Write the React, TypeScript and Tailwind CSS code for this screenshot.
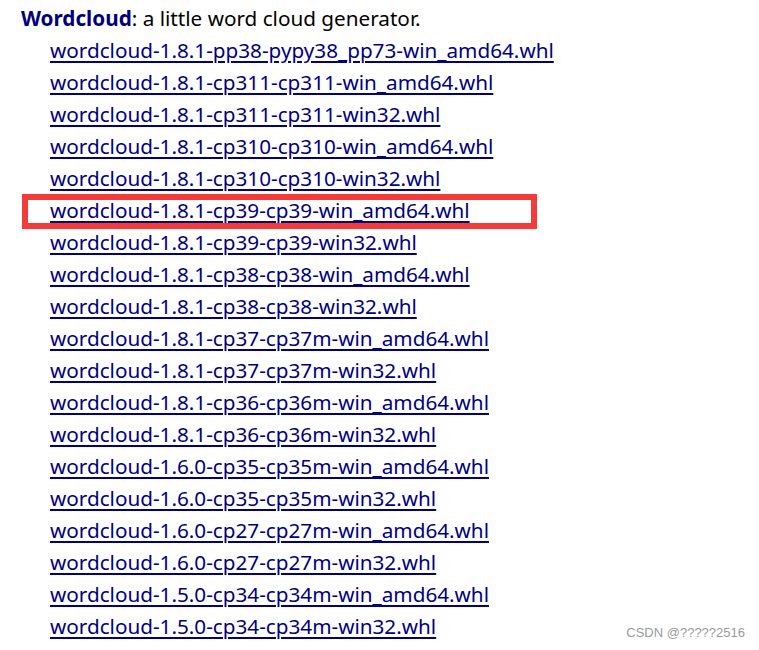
import React from 'react';

const files = [
  'wordcloud-1.8.1-pp38-pypy38_pp73-win_amd64.whl',
  'wordcloud-1.8.1-cp311-cp311-win_amd64.whl',
  'wordcloud-1.8.1-cp311-cp311-win32.whl',
  'wordcloud-1.8.1-cp310-cp310-win_amd64.whl',
  'wordcloud-1.8.1-cp310-cp310-win32.whl',
  'wordcloud-1.8.1-cp39-cp39-win_amd64.whl',
  'wordcloud-1.8.1-cp39-cp39-win32.whl',
  'wordcloud-1.8.1-cp38-cp38-win_amd64.whl',
  'wordcloud-1.8.1-cp38-cp38-win32.whl',
  'wordcloud-1.8.1-cp37-cp37m-win_amd64.whl',
  'wordcloud-1.8.1-cp37-cp37m-win32.whl',
  'wordcloud-1.8.1-cp36-cp36m-win_amd64.whl',
  'wordcloud-1.8.1-cp36-cp36m-win32.whl',
  'wordcloud-1.6.0-cp35-cp35m-win_amd64.whl',
  'wordcloud-1.6.0-cp35-cp35m-win32.whl',
  'wordcloud-1.6.0-cp27-cp27m-win_amd64.whl',
  'wordcloud-1.6.0-cp27-cp27m-win32.whl',
  'wordcloud-1.5.0-cp34-cp34m-win_amd64.whl',
  'wordcloud-1.5.0-cp34-cp34m-win32.whl',
];

export default function App() {
  return (
    <div className="relative w-[759px] h-[650px] bg-white overflow-hidden font-['Noto_Sans','Open_Sans',sans-serif] text-[20.7px] text-black">
      <div className="pl-[21px] pt-[2px]">
        <div className="h-[32px] leading-[32px]">
          <strong className="font-bold text-[#00007a]">Wordcloud</strong>: a little word cloud generator.
        </div>
        <ul className="pl-[29px]">
          {files.map((f, i) => (
            <li key={f} className="relative h-[32px] leading-[32px]">
              <a href="#" className="text-[#000080] underline decoration-2 underline-offset-[3px]">
                {f}
              </a>
              {i === 5 && (
                <span className="absolute left-[-28px] top-[0px] w-[515px] h-[35px] border-[6px] border-[#f53a3a]" />
              )}
            </li>
          ))}
        </ul>
      </div>
      <div className="absolute right-[14px] bottom-[8px] text-[13px] text-[#9a9a9a] font-['Liberation_Sans',sans-serif]">
        CSDN @?????2516
      </div>
    </div>
  );
}
